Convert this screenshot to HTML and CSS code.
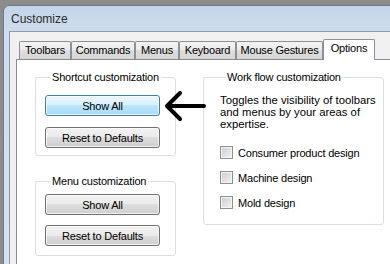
FILE: index.html
```html
<!DOCTYPE html>
<html lang="en">
<head>
  <meta charset="UTF-8">
  <meta name="viewport" content="width=device-width, initial-scale=1.0">
  <title>Customize</title>
  <link rel="stylesheet" href="styles.css">
</head>
<body>
  <div class="window">
    <div class="titlebar">Customize</div>

    <div class="client">
      <div class="tabs">
        <div class="tab tab-toolbars">Toolbars</div>
        <div class="tab tab-commands">Commands</div>
        <div class="tab tab-menus">Menus</div>
        <div class="tab tab-keyboard">Keyboard</div>
        <div class="tab tab-gestures">Mouse Gestures</div>
        <div class="tab tab-active">Options</div>
      </div>

      <div class="panel">
        <div class="col-left">
          <fieldset class="group group-shortcut">
            <legend>Shortcut customization</legend>
            <button class="btn btn-hot">Show All</button>
            <button class="btn">Reset to Defaults</button>
          </fieldset>

          <fieldset class="group group-menu">
            <legend>Menu customization</legend>
            <button class="btn">Show All</button>
            <button class="btn">Reset to Defaults</button>
          </fieldset>
        </div>

        <fieldset class="group group-flow">
          <legend>Work flow customization</legend>
          <p class="flow-text">Toggles the visibility of toolbars and menus by your areas of expertise.</p>
          <label class="check"><span class="box"></span>Consumer product design</label>
          <label class="check"><span class="box"></span>Machine design</label>
          <label class="check"><span class="box"></span>Mold design</label>
        </fieldset>

        <!-- annotation arrow pointing at Show All -->
        <svg class="arrow" width="42" height="32" viewBox="0 0 42 32">
          <path d="M40 16 H4 M16 3 L3 16 L16 29" fill="none" stroke="#000" stroke-width="4" stroke-linecap="round" stroke-linejoin="round"/>
        </svg>
      </div>
    </div>
  </div>
</body>
</html>
```

FILE: styles.css
```css
body {
  margin: 0;
  background: #8c8c8c;
  font-family: 'Liberation Sans', Arial, sans-serif;
  font-size: 11px;
  letter-spacing: -0.2px;
  color: #000;
  overflow: hidden;
  height: 264px;
}

.window {
  margin: 5px 0 0 3px;
  width: 430px;
  height: 300px;
  border: 1px solid #6d7b8d;
  border-right: none;
  border-radius: 6px 0 0 0;
  background: linear-gradient(#c4d5e8, #d0ddee 30px, #d5e1ee);
}

.titlebar {
  height: 25px;
  line-height: 26px;
  padding-left: 7px;
  font-size: 12px;
  letter-spacing: 0;
  color: #2b2b2b;
}

.client {
  margin-left: 5px;
  height: 280px;
  border-top: 1px solid #8a99ad;
  border-left: 1px solid #8a99ad;
  background: #f0f0f0;
  padding: 7px 0 0 6px;
}

.tabs {
  display: flex;
  margin-left: 3px;
  height: 20px;
  position: relative;
  z-index: 1;
}

.tab {
  box-sizing: border-box;
  margin-top: 2px;
  height: 18px;
  line-height: 17px;
  text-align: center;
  border: 1px solid #8e9099;
  border-bottom: none;
  border-radius: 2px 2px 0 0;
  background: linear-gradient(#f3f3f3, #ebebeb 50%, #dedede 50%, #d6d6d6);
  color: #000;
}

.tab-toolbars { width: 52px; }
.tab-commands { width: 64px; }
.tab-menus { width: 44px; }
.tab-keyboard { width: 57px; }
.tab-gestures { width: 87px; }

.tab-active {
  width: 52px;
  margin-top: 0;
  height: 21px;
  line-height: 17px;
  background: #fff;
}

.panel {
  position: relative;
  display: flex;
  gap: 27px;
  height: 220px;
  border: 1px solid #898c95;
  background: #fff;
  padding: 10px 0 0 18px;
}

.col-left {
  display: flex;
  flex-direction: column;
  gap: 18px;
}

.group {
  margin: 0;
  border: 1px solid #d5dfe5;
  border-radius: 3px;
  box-sizing: border-box;
}

.group legend {
  margin-left: 5px;
  padding: 0 2px 0 2px;
  line-height: 14px;
  color: #000;
}

.group-shortcut,
.group-menu {
  width: 141px;
  display: flex;
  flex-direction: column;
  gap: 11px;
  padding: 11px 0 7px 9px;
}

.group-menu {
  gap: 10px;
  padding-top: 6px;
  padding-bottom: 9px;
}

.group-flow {
  width: 181px;
  height: 155px;
  padding: 10px 0 0 16px;
}

.btn {
  width: 115px;
  height: 21px;
  padding: 0;
  border: 1px solid #707070;
  border-radius: 3px;
  background: linear-gradient(#f2f2f2, #ebebeb 50%, #dddddd 50%, #cfcfcf);
  box-shadow: inset 0 0 0 1px rgba(255,255,255,0.7);
  font-family: inherit;
  font-size: 11px;
  letter-spacing: -0.2px;
  color: #000;
}

.btn-hot {
  border-color: #3c7fb1;
  background: linear-gradient(#eaf6fd, #d9f0fc 50%, #bee6fd 50%, #a7d9f5);
}

.flow-text {
  margin: 0 0 16px 0;
  width: 160px;
  line-height: 12px;
  font-size: 11.3px;
  letter-spacing: 0;
}

.check {
  display: flex;
  align-items: center;
  gap: 5px;
  height: 13px;
  margin-bottom: 12px;
}

.box {
  width: 11px;
  height: 11px;
  border: 1px solid #8e8f8f;
  background: linear-gradient(135deg, #cbcbcb, #f4f4f4);
  box-shadow: inset 0 0 0 1px #f4f4f4;
}

.arrow {
  position: absolute;
  left: 147px;
  top: 30px;
}
```
